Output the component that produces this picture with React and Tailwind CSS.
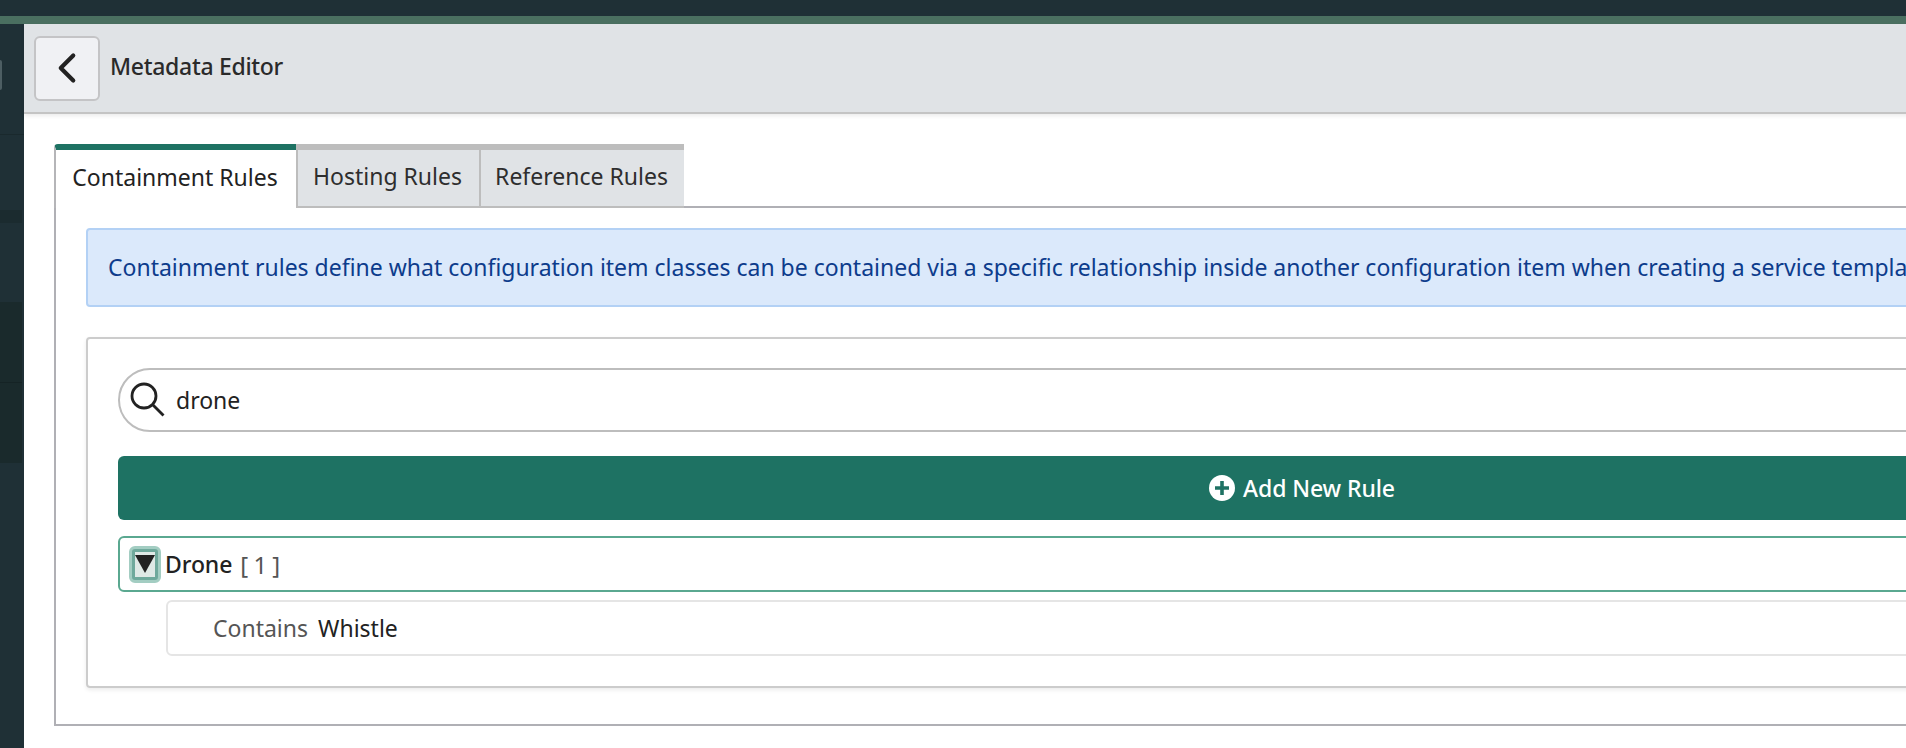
import React from 'react';
import { ChevronLeft } from 'lucide-react';

const font = "font-['Noto_Sans',sans-serif]";

const Tab = ({ label, active, width }) => (
    <div
        className={`flex h-[64px] items-center justify-center pb-[3px] pr-[2px] border-t-[6px] text-[23px] font-[450] ${width} ${
            active
                ? 'rounded-tl-[4px] border-l-2 border-t-[#1e7263] border-l-[#b5b5b8] bg-white text-[#222]'
                : 'border-l-2 border-b-2 border-t-[#bdbdbd] border-l-[#bdbdbd] border-b-[#bdbdbd] bg-[#e0e3e6] text-[#2e2e2e]'
        }`}
    >
        {label}
    </div>
);

const App = () => {
    return (
        <div className={`flex h-[748px] w-[1906px] flex-col overflow-hidden bg-white ${font}`}>
            <div className="h-4 shrink-0 bg-[#1f3036]"></div>
            <div className="h-2 shrink-0 bg-[#4a6f60]"></div>
            <div className="flex min-h-0 flex-1">
                {/* left rail, only its edge is visible */}
                <div className="flex w-6 shrink-0 flex-col bg-[#1f3036]">
                    <div className="flex h-[111px] items-center border-b border-[#1a292d] pb-[9px]">
                        <div className="h-[30px] w-[2px] rounded-r-full bg-[#4d5e63]"></div>
                    </div>
                    <div className="h-[75px]"></div>
                    <div className="h-[13px] w-[22px] bg-[#1b2b2f]"></div>
                    <div className="h-[79px]"></div>
                    <div className="h-[81px] w-[22px] border-b border-[#152325] bg-[#1a2a2c]"></div>
                    <div className="h-[80px] w-[22px] bg-[#1a2a2c]"></div>
                </div>
                <div className="w-[2524px] shrink-0">
                    <div className="flex h-[90px] items-center gap-[10px] border-b-2 border-[#c4c4c4] bg-[#e0e3e6] pl-[10px] shadow-[0_2px_4px_rgba(0,0,0,0.08)]">
                        <button className="flex h-[65px] w-[66px] items-center justify-center rounded-[6px] border-2 border-[#c4c4c6] bg-[#f0f1f4] text-[#222]">
                            <ChevronLeft size={50} strokeWidth={2} />
                        </button>
                        <span className="pb-[4px] text-[23px] font-medium tracking-[-0.3px] text-[#2a2a2a]">Metadata Editor</span>
                    </div>
                    <div className="pl-[30px] pt-[30px]">
                        <div className="flex">
                            <Tab label="Containment Rules" active width="w-[242px]" />
                            <Tab label="Hosting Rules" width="w-[183px]" />
                            <Tab label="Reference Rules" width="w-[205px]" />
                        </div>
                        <div className="-mt-[2px] h-[520px] border-t-2 border-b-2 border-l-2 border-[#b0b0b5] px-[30px] pt-[20px]">
                            <div className="flex h-[79px] items-center whitespace-nowrap rounded-[4px] border-2 border-[#b3d1f5] bg-[#dbe9fb] pl-[20px] text-[23px] font-[450] text-[#0d3c8c]">
                                Containment rules define what configuration item classes can be contained via a specific relationship inside another configuration item when creating a service template.
                            </div>
                            <div className="mt-[30px] h-[351px] rounded-[4px] border-2 border-[#cccccc] px-[30px] pt-[29px] shadow-[0_2px_4px_rgba(0,0,0,0.08)]">
                                <div className="flex h-[64px] items-center gap-[10px] rounded-full border-2 border-[#bdbdbd] pl-[10px] text-[23px] font-[450] text-[#222]">
                                    <svg width="36" height="36" viewBox="0 0 36 36" fill="none" stroke="#222" strokeWidth="2.8">
                                        <circle cx="14" cy="14" r="12" />
                                        <path d="M23 23L33.5 33.5" />
                                    </svg>
                                    <span>drone</span>
                                </div>
                                <button className="mt-[24px] flex h-[64px] w-full items-center justify-center gap-[8px] rounded-[6px] bg-[#1e7263] text-[23px] font-medium tracking-[-0.1px] text-white">
                                    <svg width="26" height="26" viewBox="0 0 26 26">
                                        <circle cx="13" cy="13" r="13" fill="#fff" />
                                        <path d="M13 6v14M6 13h14" stroke="#1e7263" strokeWidth="3.6" />
                                    </svg>
                                    Add New Rule
                                </button>
                                <div className="mt-[16px] flex h-[56px] items-center rounded-[6px] border-2 border-[#5aa890] pl-[9px] text-[23px]">
                                    <div className="flex h-[37px] w-[32px] items-start justify-center rounded-[6px] border-[3px] border-[#a3cdc2] bg-[#6fa99c] p-[3px]">
                                        <div className="flex h-full w-full items-start justify-center bg-[#dfe9e6] pt-[2px]">
                                            <svg width="22" height="20" viewBox="0 0 22 20">
                                                <path d="M0 0H22L11 20Z" fill="#222" />
                                            </svg>
                                        </div>
                                    </div>
                                    <span className="ml-[4px] pt-[1px] font-medium tracking-[-0.1px] text-[#222]">Drone</span>
                                    <span className="ml-[8px] pt-[1px] text-[24px] font-[450] tracking-[-0.5px] text-[#555]">[ 1 ]</span>
                                </div>
                                <div className="ml-[48px] mt-[8px] flex h-[56px] items-center gap-[10px] rounded-[6px] border-2 border-[#e5e5e5] pl-[45px] pt-[1px] text-[23px] font-[450]">
                                    <span className="text-[#555]">Contains</span>
                                    <span className="text-[#222]">Whistle</span>
                                </div>
                            </div>
                        </div>
                    </div>
                </div>
            </div>
        </div>
    );
};

export default App;
